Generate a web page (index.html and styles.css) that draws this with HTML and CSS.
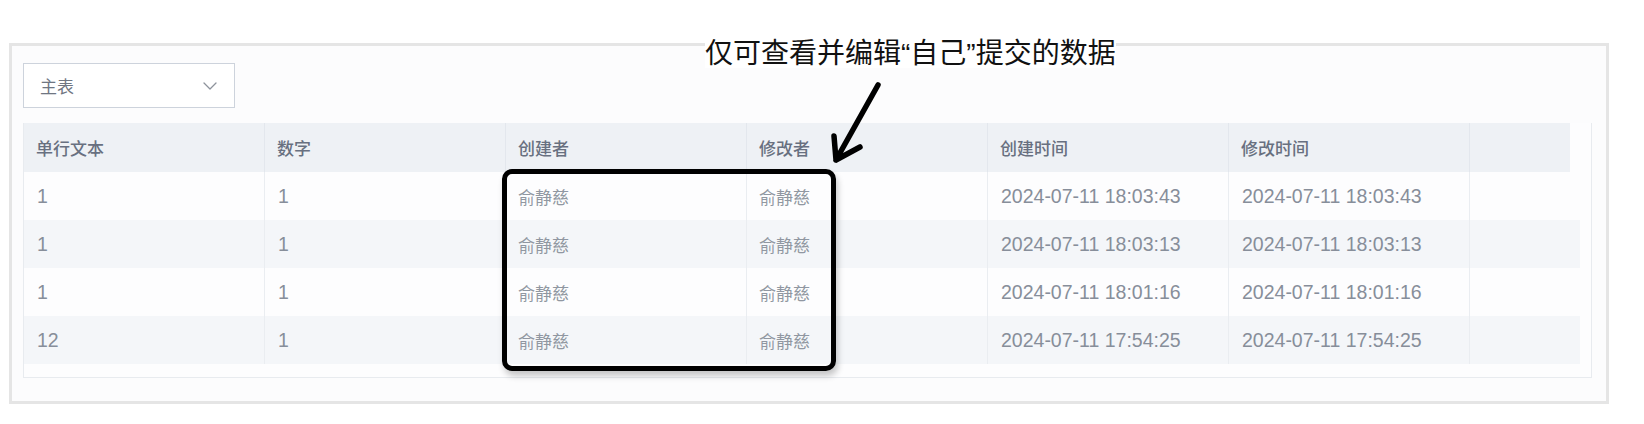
FILE: index.html
```html
<!DOCTYPE html>
<html lang="zh-CN">
<head>
<meta charset="utf-8">
<title>主表</title>
<link rel="stylesheet" href="styles.css">
</head>
<body>
<div class="page">
  <div class="panel">
    <div class="select">
      <span class="select-label">主表</span>
      <svg class="chevron" width="14" height="8" viewBox="0 0 14 8"><polyline points="1,1 7,7 13,1" fill="none" stroke="#8d939c" stroke-width="1.3" stroke-linecap="round" stroke-linejoin="round"/></svg>
    </div>
    <div class="table">
      <div class="row head">
        <div class="cell">单行文本</div>
        <div class="cell">数字</div>
        <div class="cell">创建者</div>
        <div class="cell">修改者</div>
        <div class="cell">创建时间</div>
        <div class="cell">修改时间</div>
        <div class="cell last"></div>
      </div>
      <div class="row body">
        <div class="cell">1</div>
        <div class="cell">1</div>
        <div class="cell name">俞静慈</div>
        <div class="cell name">俞静慈</div>
        <div class="cell">2024-07-11 18:03:43</div>
        <div class="cell">2024-07-11 18:03:43</div>
        <div class="cell last"></div>
      </div>
      <div class="row body alt">
        <div class="cell">1</div>
        <div class="cell">1</div>
        <div class="cell name">俞静慈</div>
        <div class="cell name">俞静慈</div>
        <div class="cell">2024-07-11 18:03:13</div>
        <div class="cell">2024-07-11 18:03:13</div>
        <div class="cell last"></div>
      </div>
      <div class="row body">
        <div class="cell">1</div>
        <div class="cell">1</div>
        <div class="cell name">俞静慈</div>
        <div class="cell name">俞静慈</div>
        <div class="cell">2024-07-11 18:01:16</div>
        <div class="cell">2024-07-11 18:01:16</div>
        <div class="cell last"></div>
      </div>
      <div class="row body alt">
        <div class="cell">12</div>
        <div class="cell">1</div>
        <div class="cell name">俞静慈</div>
        <div class="cell name">俞静慈</div>
        <div class="cell">2024-07-11 17:54:25</div>
        <div class="cell">2024-07-11 17:54:25</div>
        <div class="cell last"></div>
      </div>
    </div>
  </div>

  <div class="note">仅可查看并编辑“自己”提交的数据</div>
  <div class="highlight"></div>
  <svg class="arrow" width="70" height="100" viewBox="0 0 70 100">
    <path d="M58 10 L16 85 M14 61 L16 85 L40 72" fill="none" stroke="#000" stroke-width="5.5" stroke-linecap="round" stroke-linejoin="round"/>
  </svg>
</div>
</body>
</html>
```

FILE: styles.css
```css
html, body {
  margin: 0;
  padding: 0;
  background: #ffffff;
}

body {
  font-family: "Liberation Sans", "Noto Sans CJK SC", sans-serif;
  color: #878e9a;
}

.page {
  position: relative;
  width: 1644px;
  height: 424px;
  padding: 43px 0 0 9px;
  box-sizing: border-box;
}

.panel {
  width: 1600px;
  height: 361px;
  box-sizing: border-box;
  border: 3px solid #e5e5e5;
  background: #fcfcfd;
  padding: 17px 14px 23px 11px;
  display: flex;
  flex-direction: column;
  gap: 15px;
}

.select {
  width: 212px;
  height: 45px;
  box-sizing: border-box;
  border: 1px solid #cdd3dc;
  background: #ffffff;
  display: flex;
  align-items: center;
  justify-content: space-between;
  padding: 0 17px 0 16px;
}

.select-label {
  font-family: "Noto Sans CJK SC", sans-serif;
  font-size: 17px;
  color: #6f7682;
}

.chevron {
  display: block;
  margin-top: 1px;
}

.table {
  width: 1569px;
  height: 255px;
  box-sizing: border-box;
  border: 1px solid #e8ebef;
  border-top: none;
  background: #fdfdfe;
  display: flex;
  flex-direction: column;
}

.row {
  display: grid;
  grid-template-columns: repeat(6, 241px) 110px;
}

.row.head {
  grid-template-columns: repeat(6, 241px) 100px;
  width: 1546px;
  height: 49px;
  background: #eef1f5;
}

.row.body {
  width: 1556px;
  height: 48px;
  background: #fdfdfe;
}

.row.body.alt {
  background: #f4f6f9;
}

.cell {
  display: flex;
  align-items: center;
  padding-left: 13px;
  box-sizing: border-box;
  border-right: 1px solid #eaedf1;
  white-space: nowrap;
  font-size: 19.5px;
  color: #878e9a;
}

.cell.last {
  border-right: none;
}

.head .cell {
  font-family: "Noto Sans CJK SC", sans-serif;
  font-size: 17px;
  font-weight: 500;
  color: #687080;
  border-right-color: #e3e7ed;
  padding-left: 12px;
}

.cell.name {
  font-family: "Noto Sans CJK SC", sans-serif;
  font-size: 17px;
  color: #9097a1;
  padding-left: 12px;
}

.note {
  position: absolute;
  left: 705px;
  top: 40px;
  font-family: "Liberation Sans", "Noto Sans CJK SC", sans-serif;
  font-size: 28px;
  line-height: 28px;
  color: #111111;
  background: #ffffff;
  white-space: nowrap;
}

.highlight {
  position: absolute;
  left: 502px;
  top: 169px;
  width: 334px;
  height: 202px;
  box-sizing: border-box;
  border: 5px solid #000000;
  border-radius: 10px;
  box-shadow: 2px 5px 6px rgba(0, 0, 0, 0.22);
}

.arrow {
  position: absolute;
  left: 820px;
  top: 75px;
  overflow: visible;
}
```
